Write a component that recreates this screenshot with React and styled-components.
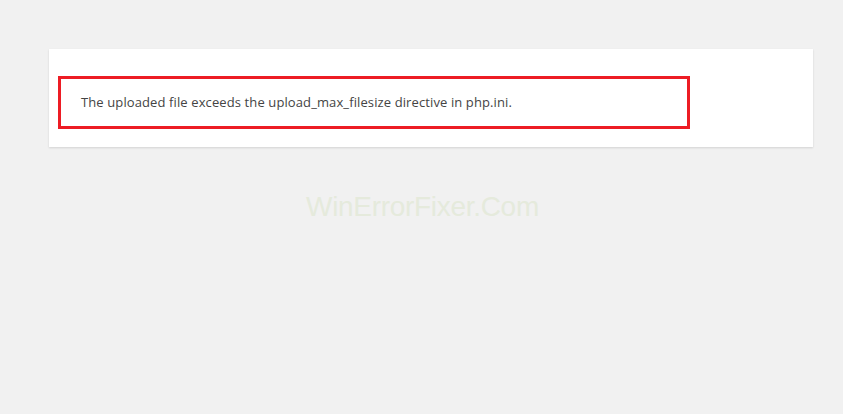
import React from 'react'
import styled, { createGlobalStyle } from "styled-components";

const GlobalStyle = createGlobalStyle`
  body {
    margin: 0;
    background: #f1f1f1;
    font-family: "Open Sans", "Noto Sans", sans-serif;
  }
`;

const Page = styled.div`
  width: 843px;
  height: 414px;
  padding: 49px 30px 0 49px;
  box-sizing: border-box;
  display: flex;
  flex-direction: column;
  align-items: flex-start;
`;

const Card = styled.div`
  width: 764px;
  height: 98px;
  box-sizing: border-box;
  background: #fff;
  box-shadow: 0 1px 2px rgba(0, 0, 0, 0.13);
  padding: 27px 0 0 9px;
`;

const Notice = styled.div`
  width: 632px;
  height: 53px;
  box-sizing: border-box;
  border: 3px solid #ed1c24;
  display: flex;
  align-items: center;
  padding: 0 0 0 20px;
`;

const Message = styled.p`
  margin: 0;
  font-size: 13px;
  letter-spacing: 0.11px;
  color: #444;
  line-height: 1;
`;

const Watermark = styled.div`
  align-self: stretch;
  margin: 46px 0 0 0;
  padding-left: 257px;
  font-family: "Liberation Sans", Arial, sans-serif;
  font-size: 28px;
  letter-spacing: -0.3px;
  line-height: 28px;
  color: #e5eadc;
`;

const App = () => {
  return (
    <>
      <GlobalStyle />
      <Page>
        <Card>
          <Notice>
            <Message>The uploaded file exceeds the upload_max_filesize directive in php.ini.</Message>
          </Notice>
        </Card>
        <Watermark>WinErrorFixer.Com</Watermark>
      </Page>
    </>
  );
};

export default App;
